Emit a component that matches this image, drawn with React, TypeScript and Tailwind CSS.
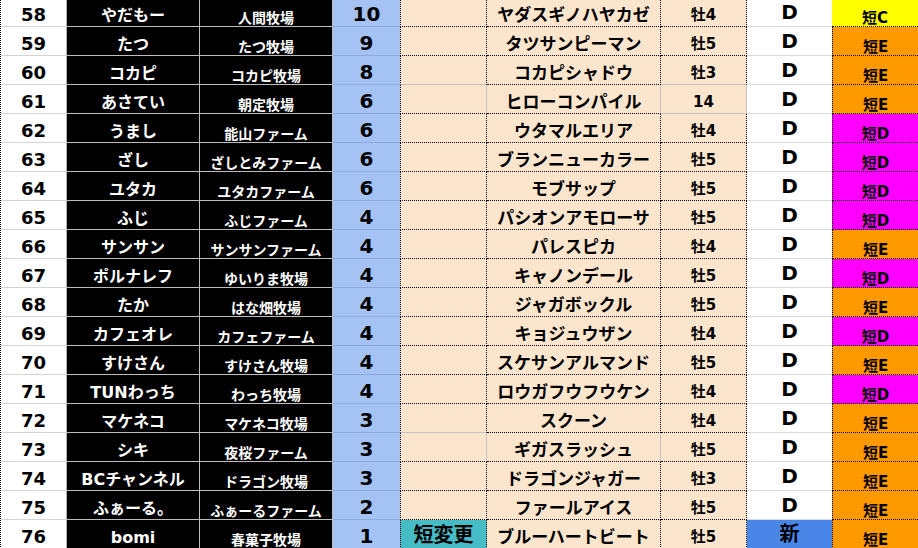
import React from 'react';

type Row = {
  n: number;
  name: string;
  farm: string;
  pt: string;
  horse: string;
  sex: string;
  tan: string;
  tanBg: string;
};

const Y = 'bg-[#ffff00]';
const O = 'bg-[#ff9900]';
const M = 'bg-[#ff00ff]';

const rows: Row[] = [
  { n: 58, name: 'やだもー', farm: '人間牧場', pt: '10', horse: 'ヤダスギノハヤカゼ', sex: '牡4', tan: '短C', tanBg: Y },
  { n: 59, name: 'たつ', farm: 'たつ牧場', pt: '9', horse: 'タツサンピーマン', sex: '牡5', tan: '短E', tanBg: O },
  { n: 60, name: 'コカピ', farm: 'コカピ牧場', pt: '8', horse: 'コカピシャドウ', sex: '牡3', tan: '短E', tanBg: O },
  { n: 61, name: 'あさてい', farm: '朝定牧場', pt: '6', horse: 'ヒローコンパイル', sex: '14', tan: '短E', tanBg: O },
  { n: 62, name: 'うまし', farm: '能山ファーム', pt: '6', horse: 'ウタマルエリア', sex: '牡4', tan: '短D', tanBg: M },
  { n: 63, name: 'ざし', farm: 'ざしとみファーム', pt: '6', horse: 'ブランニューカラー', sex: '牡5', tan: '短D', tanBg: M },
  { n: 64, name: 'ユタカ', farm: 'ユタカファーム', pt: '6', horse: 'モブサップ', sex: '牡5', tan: '短D', tanBg: M },
  { n: 65, name: 'ふじ', farm: 'ふじファーム', pt: '4', horse: 'パシオンアモローサ', sex: '牡5', tan: '短D', tanBg: M },
  { n: 66, name: 'サンサン', farm: 'サンサンファーム', pt: '4', horse: 'パレスピカ', sex: '牡4', tan: '短E', tanBg: O },
  { n: 67, name: 'ポルナレフ', farm: 'ゆいりま牧場', pt: '4', horse: 'キャノンデール', sex: '牡5', tan: '短D', tanBg: M },
  { n: 68, name: 'たか', farm: 'はな畑牧場', pt: '4', horse: 'ジャガボックル', sex: '牡5', tan: '短E', tanBg: O },
  { n: 69, name: 'カフェオレ', farm: 'カフェファーム', pt: '4', horse: 'キョジュウザン', sex: '牡4', tan: '短D', tanBg: M },
  { n: 70, name: 'すけさん', farm: 'すけさん牧場', pt: '4', horse: 'スケサンアルマンド', sex: '牡5', tan: '短E', tanBg: O },
  { n: 71, name: 'TUNわっち', farm: 'わっち牧場', pt: '4', horse: 'ロウガフウフウケン', sex: '牡4', tan: '短D', tanBg: M },
  { n: 72, name: 'マケネコ', farm: 'マケネコ牧場', pt: '3', horse: 'スクーン', sex: '牡4', tan: '短E', tanBg: O },
  { n: 73, name: 'シキ', farm: '夜桜ファーム', pt: '3', horse: 'ギガスラッシュ', sex: '牡5', tan: '短E', tanBg: O },
  { n: 74, name: 'BCチャンネル', farm: 'ドラゴン牧場', pt: '3', horse: 'ドラゴンジャガー', sex: '牡3', tan: '短E', tanBg: O },
  { n: 75, name: 'ふぁーる。', farm: 'ふぁーるファーム', pt: '2', horse: 'ファールアイス', sex: '牡5', tan: '短E', tanBg: O },
  { n: 76, name: 'bomi', farm: '春菓子牧場', pt: '1', horse: 'ブルーハートビート', sex: '牡5', tan: '短E', tanBg: O },
];

const cell = 'flex items-end justify-center leading-none font-bold whitespace-nowrap overflow-hidden';

function SheetRow({ r }: { r: Row }) {
  const last = r.n === 76;
  // a few peach cells carry plain grey gridlines instead of dotted borders
  const eGreyBottom = r.n === 60 || r.n === 72;
  const eGreyRight = r.n === 61 || r.n === 73;
  const fGreyRight = r.n === 61 || r.n === 73;
  const gGrey = r.n === 61;
  const gGreyBottom = r.n === 60 || r.n === 61;

  return (
    <div className="grid grid-cols-[66px_133px_133px_67px_87px_174px_86px_85px_86px] h-[29px]">
      <div className={`${cell} bg-white border-r border-b border-r-[#b3b3b3] border-b-[#d4d4d4] text-[18px] text-black pb-[2px]`}>
        {r.n}
      </div>
      <div className={`${cell} bg-black border-r border-b border-[#bdbdbd] text-white text-[16px] pb-[2px]`}>
        {r.name}
      </div>
      <div className={`${cell} bg-black border-r border-b border-[#bdbdbd] text-white text-[14px] pb-[1px]`}>
        {r.farm}
      </div>
      <div className={`${cell} bg-[#a4c2f4] border-b border-[#90aade] text-black text-[20px] pb-[2px]`}>
        {r.pt}
      </div>
      <div
        className={`${cell} border-l border-r border-b border-dotted border-black text-black ${
          last ? 'bg-[#46bdc6] text-[20px] pb-[3px]' : 'bg-[#fce5cd]'
        } ${eGreyBottom ? '[border-bottom-style:solid] border-b-[#c3c3c3]' : ''} ${
          eGreyRight ? '[border-right-style:solid] border-r-[#c3c3c3]' : ''
        }`}
      >
        {last ? '短変更' : ''}
      </div>
      <div
        className={`${cell} bg-[#fce5cd] border-r border-b border-dotted border-black text-black text-[17px] pb-[2px] ${
          fGreyRight ? '[border-right-style:solid] border-r-[#c3c3c3]' : ''
        }`}
      >
        {r.horse}
      </div>
      <div
        className={`${cell} bg-[#fce5cd] border-r border-b border-dotted border-black text-black text-[15px] pb-[3px] ${
          gGrey ? '[border-right-style:solid] border-r-[#c3c3c3]' : ''
        } ${gGreyBottom ? '[border-bottom-style:solid] border-b-[#c3c3c3]' : ''}`}
      >
        {r.sex}
      </div>
      <div
        className={`${cell} border-b text-black text-[20px] pb-[4px] ${
          last ? 'bg-[#4a86e8] border-[#4a86e8]' : 'bg-white border-[#d9d9d9]'
        }`}
      >
        {last ? '新' : 'D'}
      </div>
      <div
        className={`${cell} ${r.tanBg} border-b border-dotted border-black text-black text-[15px] pb-0 ${
          r.n === 58 ? '' : 'border-l'
        }`}
      >
        {r.tan}
      </div>
    </div>
  );
}

export default function App() {
  return (
    <div className="w-[918px] h-[548px] overflow-hidden bg-white font-['DejaVu_Sans','Noto_Sans_CJK_JP',sans-serif]">
      <div className="-mt-[2px] border-l border-dotted border-black">
        {rows.map((r) => (
          <SheetRow key={r.n} r={r} />
        ))}
      </div>
    </div>
  );
}
